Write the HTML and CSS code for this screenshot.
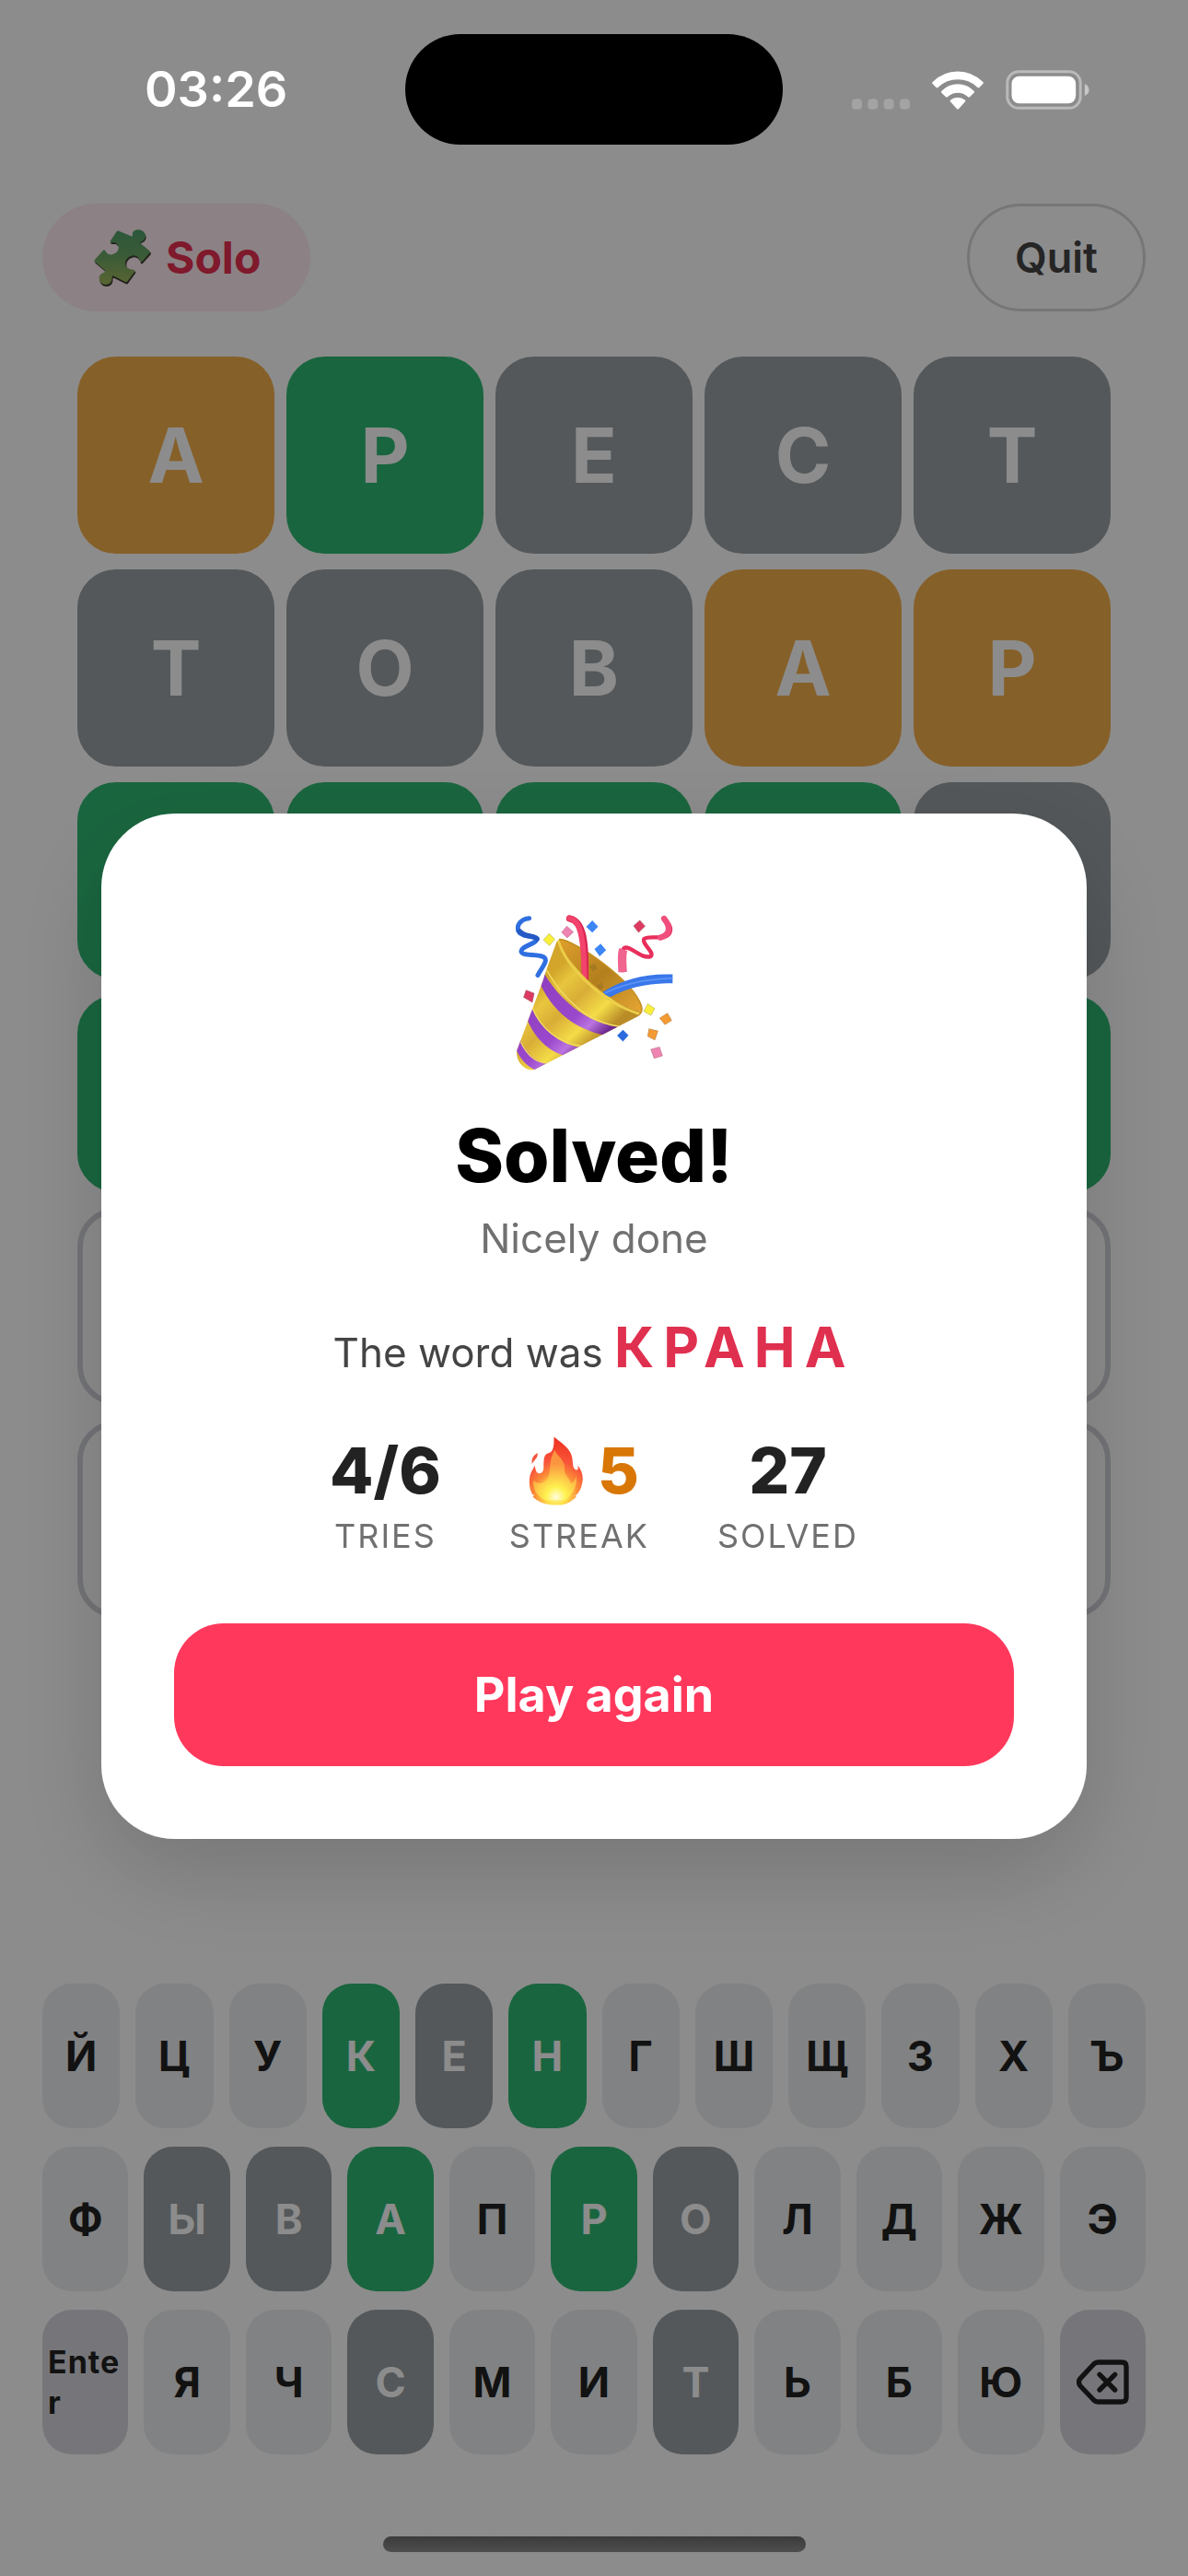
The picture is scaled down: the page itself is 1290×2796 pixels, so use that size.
FILE: index.html
```html
<!DOCTYPE html>
<html lang="en">
<head>
<meta charset="utf-8">
<meta name="viewport" content="width=device-width, initial-scale=1">
<title>Solo – word puzzle</title>
<link rel="stylesheet" href="styles.css">
</head>
<body>
<div class="app">
  <div class="status-bar">
    <div class="status-left"><time class="clock">03:26</time></div>
    <div class="island"></div>
    <div class="status-right">
      <svg class="icon-signal" viewBox="48 134 189 34" aria-hidden="true"><g fill="#fff" fill-opacity=".2"><rect x="48" y="134" width="33" height="34" rx="12"/><rect x="100" y="134" width="33" height="34" rx="12"/><rect x="152" y="134" width="33" height="34" rx="12"/><rect x="204" y="134" width="33" height="34" rx="12"/></g></svg>
      <svg class="icon-wifi" viewBox="310 44 167 124" aria-hidden="true"><g fill="#fff"><path d="M312 79Q347 45 393.500 45Q440 45 475 79Q478 82 475 85L464 96Q461 99 457 96Q430 71 393.500 71Q357 71 330 96Q326 99 323 96L312 85Q309 82 312 79Z"/><path d="M341 108Q364 86 393.500 86Q423 86 446 108Q449 111 446 114L433 127Q430 130 426 127Q412 114 393.500 114Q375 114 361 127Q357 130 354 127L341 114Q338 111 341 108Z"/><path d="M370 137Q380 129 393.500 129Q407 129 417 137Q420 140 417 143L397 166Q393 169 390 166L370 143Q367 140 370 137Z"/></g></svg>
      <svg class="icon-battery" viewBox="548 42 272 129" aria-hidden="true"><rect x="553" y="47" width="238" height="119" rx="37" fill="none" stroke="#fff" stroke-opacity=".4" stroke-width="9"/><rect x="567" y="62" width="209" height="89" rx="25" fill="#fff"/><path d="M805 87Q819 93 819 106.500Q819 120 805 126Z" fill="#fff" fill-opacity=".5"/></svg>
    </div>
  </div>

  <header class="top-bar">
    <div class="mode">
      <svg class="puzzle" viewBox="64 24 186 186" aria-hidden="true">
        <defs><linearGradient id="leaf" x1="0" y1="0" x2="0" y2="1"><stop offset="0" stop-color="#4f9e6a"/><stop offset=".5" stop-color="#6ca664"/><stop offset="1" stop-color="#a5b85c"/></linearGradient></defs>
        <path transform="translate(2 4)" fill="#3c3f35" d="M145 29L188 47C192 44 188 39 191 33C198 22 215 22 225 31C236 42 233 56 222 62C217 65 214 64 215 69L247 96Q249 99 246 103L220 132Q217 134 215 130C212 120 206 112 194 111C180 111 168 123 168 136C168 149 178 155 193 156Q199 157 198 162L173 196Q170 200 165 197L127 178C121 178 126 188 121 196C113 209 96 208 87 199C77 188 80 173 91 168C98 164 104 165 101 159L67 130Q64 127 67 123L94 93Q98 90 101 95C105 106 118 112 131 105C144 98 148 83 141 74C136 67 130 68 121 68Q115 68 118 62L138 31Q141 28 145 29Z"/>
        <path fill="url(#leaf)" d="M145 29L188 47C192 44 188 39 191 33C198 22 215 22 225 31C236 42 233 56 222 62C217 65 214 64 215 69L245 94Q248 97 245 101L220 130Q217 132 215 128C212 118 206 110 194 109C180 109 166 121 166 134C166 147 178 154 193 155Q199 156 197 161L173 193Q170 197 165 194L127 175C120 176 125 186 120 194C112 206 96 206 87 197C77 186 80 172 91 167C98 163 104 164 101 158L67 129Q64 126 67 122L94 92Q98 89 101 94C105 105 118 110 131 103C144 96 148 82 141 73C136 66 130 67 121 67Q115 67 118 61L138 31Q141 28 145 29Z"/>
      </svg>
      <span>Solo</span>
    </div>
    <button class="quit" type="button">Quit</button>
  </header>

  <main class="board">
    <div class="tile near">А</div><div class="tile hit">Р</div><div class="tile miss">Е</div><div class="tile miss">С</div><div class="tile miss">Т</div>
    <div class="tile miss">Т</div><div class="tile miss">О</div><div class="tile miss">В</div><div class="tile near">А</div><div class="tile near">Р</div>
    <div class="tile hit"></div><div class="tile hit"></div><div class="tile hit"></div><div class="tile hit"></div><div class="tile miss"></div>
    <div class="tile hit"></div><div class="tile hit"></div><div class="tile hit"></div><div class="tile hit"></div><div class="tile hit"></div>
    <div class="tile"></div><div class="tile"></div><div class="tile"></div><div class="tile"></div><div class="tile"></div>
    <div class="tile"></div><div class="tile"></div><div class="tile"></div><div class="tile"></div><div class="tile"></div>
  </main>

  <div class="keyboard">
    <div class="key-row">
      <button class="key" type="button">Й</button><button class="key" type="button">Ц</button><button class="key" type="button">У</button><button class="key hit" type="button">К</button><button class="key miss" type="button">Е</button><button class="key hit" type="button">Н</button><button class="key" type="button">Г</button><button class="key" type="button">Ш</button><button class="key" type="button">Щ</button><button class="key" type="button">З</button><button class="key" type="button">Х</button><button class="key" type="button">Ъ</button>
    </div>
    <div class="key-row">
      <button class="key" type="button">Ф</button><button class="key miss" type="button">Ы</button><button class="key miss" type="button">В</button><button class="key hit" type="button">А</button><button class="key" type="button">П</button><button class="key hit" type="button">Р</button><button class="key miss" type="button">О</button><button class="key" type="button">Л</button><button class="key" type="button">Д</button><button class="key" type="button">Ж</button><button class="key" type="button">Э</button>
    </div>
    <div class="key-row">
      <button class="key action enter" type="button">Enter</button><button class="key" type="button">Я</button><button class="key" type="button">Ч</button><button class="key miss" type="button">С</button><button class="key" type="button">М</button><button class="key" type="button">И</button><button class="key miss" type="button">Т</button><button class="key" type="button">Ь</button><button class="key" type="button">Б</button><button class="key" type="button">Ю</button><button class="key action" type="button" aria-label="Delete"><svg class="icon-delete" viewBox="54 52 171 147" aria-hidden="true"><g fill="none" stroke="#212121" stroke-width="16" stroke-linecap="round" stroke-linejoin="round"><path d="M124 61H202Q216 61 216 75V176Q216 190 202 190H124Q116 190 110 184L67 139Q56 126 67 113L110 67Q116 61 124 61Z"/><path d="M129 101L179 151M179 101L129 151"/></g></svg></button>
    </div>
  </div>

  <div class="home-indicator"></div>
</div>

<div class="overlay">
  <section class="modal" role="dialog" aria-modal="true" aria-labelledby="result-title">
    <svg class="party" viewBox="178 155 514 514" aria-hidden="true">
      <defs>
        <linearGradient id="gold" gradientUnits="userSpaceOnUse" x1="240" y1="400" x2="420" y2="590"><stop offset="0" stop-color="#d3a52b"/><stop offset=".2" stop-color="#e8c63e"/><stop offset=".45" stop-color="#d9ad36"/><stop offset=".75" stop-color="#f4dc48"/><stop offset="1" stop-color="#b98c28"/></linearGradient>
        <linearGradient id="violet" gradientUnits="userSpaceOnUse" x1="240" y1="400" x2="420" y2="590"><stop offset="0" stop-color="#8f3fc0"/><stop offset=".6" stop-color="#9a48cc"/><stop offset=".8" stop-color="#bb74e0"/><stop offset="1" stop-color="#6d2a90"/></linearGradient>
        <linearGradient id="mouth" x1="0" y1="0" x2="1" y2="1"><stop offset="0" stop-color="#e0a02c"/><stop offset=".5" stop-color="#b37f1e"/><stop offset="1" stop-color="#e8a834"/></linearGradient>
        <clipPath id="cone"><path d="M312 244C300 280 280 330 268 370L182 600C176 632 205 668 238 664L575 490C590 484 588 470 560 468C480 440 350 330 322 244Z"/></clipPath>
      </defs>
      <path d="M222 169C188 172 176 202 192 218C208 232 240 224 247 236C246 254 198 258 196 276C195 294 250 284 270 296C286 306 262 332 250 355" fill="none" stroke="#2f6fe0" stroke-width="15" stroke-linecap="round" stroke-linejoin="round"/>
      <path d="M191 212C208 232 240 224 247 236" fill="none" stroke="#2559c4" stroke-width="17" stroke-linecap="round"/>
      <path d="M322 238C370 240 560 370 588 455C594 480 580 490 560 478C470 450 340 330 315 250Z" fill="url(#mouth)" stroke="#c59020" stroke-width="5"/>
      <path d="M418 325l18-8 8 16-15 10ZM442 388l15-8 8 14-12 10Z" fill="#a57a20"/>
      <path d="M354 170C398 178 408 245 404 375" fill="none" stroke="#d92450" stroke-width="22" stroke-linecap="round"/>
      <path d="M354 169C388 176 400 225 402 360" fill="none" stroke="#f2436c" stroke-width="18" stroke-linecap="round"/>
      <g clip-path="url(#cone)">
        <path d="M170 230H600V680H170Z" fill="url(#gold)"/>
        <path d="M250 310C300 420 410 525 540 525L500 555C380 545 290 470 250 365Z" fill="url(#violet)"/>
        <path d="M225 445C250 520 320 590 410 592L350 620C290 610 235 560 210 485Z" fill="url(#violet)"/>
        <path d="M190 560C210 605 240 640 290 645L250 668C220 655 195 635 176 590Z" fill="url(#violet)"/>
        <path d="M275 332C330 430 415 515 530 523M230 458C260 530 320 580 395 586M194 572C212 610 240 640 280 642" fill="none" stroke="#f3dc62" stroke-width="4"/>
      </g>
      <path d="M318 245C340 320 450 440 578 480" fill="none" stroke="#edcf4b" stroke-width="8" stroke-linecap="round"/>
      <path d="M462 410Q555 348 690 352V381Q570 380 490 425Q478 428 462 410Z" fill="#3977ea"/>
      <path d="M470 413Q560 368 690 365" fill="none" stroke="#5d94f5" stroke-width="5"/>
      <path d="M526 345C525 310 518 280 532 266C552 256 590 306 619 293C632 280 588 252 597 236C618 222 665 244 680 218C690 198 674 184 663 168" fill="none" stroke="#e82f5c" stroke-width="13" stroke-linejoin="round"/>
      <path d="M527 345C526 315 522 292 529 271" fill="none" stroke="#f0648f" stroke-width="28"/>
      <path d="M662 170C690 205 675 225 650 232" fill="none" stroke="#f04f7e" stroke-width="19" stroke-linecap="round"/>
      <g fill="#3d86f4"><path d="M428 176l19 20-19 20-20-19ZM455 252l18 21-21 20-17-23Z"/><path fill="#2c6bdd" d="M528 533l18 18-18 20-19-19Z"/></g>
      <path fill="#faf03c" stroke="#b9b45a" stroke-width="2" d="M287 219l19 19-18 20-20-18ZM609 448l23 16-13 22-23-13Z"/>
      <path fill="#ee84b1" stroke="#c3718f" stroke-width="2" d="M345 195l21 19-20 19-18-18ZM619 597l28-8 10 29-27 8Z"/>
      <path fill="#dd3a62" stroke="#a64a5e" stroke-width="2" d="M583 176l17 19-21 20-16-21ZM212 404l26 10-6 29-28-16Z"/>
      <path fill="#f49a32" stroke="#b98040" stroke-width="2" d="M673 479l14 23-22 14-17-21ZM613 530l29 7-10 29-23-12Z"/>
    </svg>
    <h1 class="title" id="result-title">Solved!</h1>
    <p class="subtitle">Nicely done</p>
    <p class="answer">The word was <strong class="word">КРАНА</strong></p>
    <dl class="stats">
      <div class="stat"><dt>TRIES</dt><dd>4/6</dd></div>
      <div class="stat"><dt>STREAK</dt><dd class="streak"><svg class="fire" viewBox="32 26 178 226" aria-hidden="true">
        <defs><radialGradient id="flame" gradientUnits="userSpaceOnUse" cx="122" cy="215" r="180"><stop offset="0" stop-color="#fff7b0"/><stop offset=".2" stop-color="#ffe24a"/><stop offset=".4" stop-color="#fb8a37"/><stop offset=".6" stop-color="#f9553a"/><stop offset="1" stop-color="#ee3322"/></radialGradient><radialGradient id="core" gradientUnits="userSpaceOnUse" cx="122" cy="225" r="110"><stop offset="0" stop-color="#fffde0"/><stop offset=".3" stop-color="#fff24f"/><stop offset="1" stop-color="#fc9540"/></radialGradient></defs>
        <path fill="url(#flame)" d="M115 27C140 48 176 68 176 106C177 128 181 134 190 136C195 134 194 128 193 121C207 137 213 160 207 181C205 195 198 210 184 222L189 224L180 231C160 250 140 251 120 251C93 251 67 242 54 231L46 224L50 218L44 216C36 200 32 180 36 158C39 142 47 134 52 121C55 135 56 145 65 147C75 149 82 140 81 126C82 105 80 85 97 81C110 78 116 65 115 27Z"/>
        <path fill="#f4553c" d="M61 80C64 96 52 101 43 116C42 100 45 89 61 80Z"/>
        <path fill="url(#core)" d="M117 70C125 90 153 105 150 130C147 154 165 160 170 180C178 180 185 165 188 157C193 190 176 216 150 235H88C60 222 45 200 48 170C60 185 88 182 97 158C105 130 97 110 117 70Z"/>
      </svg><span>5</span></dd></div>
      <div class="stat"><dt>SOLVED</dt><dd>27</dd></div>
    </dl>
    <button class="play" type="button">Play again</button>
  </section>
</div>
</body>
</html>
```
FILE: styles.css
```css
* {
  box-sizing: border-box;
  margin: 0;
  padding: 0;
}

body {
  background: #fff;
  color: #212121;
  font-family: Inter, "Liberation Sans", sans-serif;
}

button {
  border: 0;
  font: inherit;
  color: inherit;
  background: none;
  cursor: pointer;
}

svg {
  display: block;
  flex: none;
}

.app {
  display: flex;
  flex-direction: column;
  min-height: 100vh;
  padding-bottom: 26px;
}

/* Status bar and home indicator stay above the dimmed layer */
.status-bar,
.home-indicator {
  position: relative;
  z-index: 3;
}

.status-bar {
  display: grid;
  grid-template-columns: minmax(0, 1fr) 410px minmax(0, 1fr);
  align-items: center;
  padding-top: 37px;
}

.status-left {
  padding-left: 157px;
}

.clock {
  color: #fff;
  font-size: 54px;
  font-weight: 600;
  line-height: 64px;
}

.island {
  height: 120px;
  border-radius: 60px;
  background: #000;
}

.status-right {
  display: flex;
  justify-content: flex-end;
  align-items: flex-end;
  gap: 24px;
  padding-right: 107px;
}

.icon-signal {
  width: 63px;
  height: 12px;
}

.icon-wifi {
  width: 56px;
  height: 42px;
}

.icon-battery {
  width: 91px;
  height: 43px;
}

.top-bar {
  display: flex;
  justify-content: space-between;
  margin-top: 64px;
  padding: 0 46px;
}

.mode,
.quit {
  display: flex;
  align-items: center;
  height: 117px;
  border-radius: 59px;
}

.mode {
  gap: 16px;
  padding: 0 54px 0 56px;
  background: #ffecf1;
  color: #e72f50;
  font-size: 48px;
  font-weight: 700;
}

.puzzle {
  width: 62px;
  height: 62px;
}

.quit {
  padding: 0 49px;
  border: 3px solid #d8d8d8;
  color: #444;
  font-size: 45px;
  font-weight: 600;
}

.board {
  display: grid;
  grid-template-columns: repeat(5, 1fr);
  gap: 17px 13px;
  margin: 49px 84px;
}

.tile {
  display: flex;
  align-items: center;
  justify-content: center;
  aspect-ratio: 1;
  border: 6px solid #d2d3da;
  border-radius: 42px;
  color: #fff;
  font-size: 82px;
  font-weight: 700;
}

.hit,
.hit.key {
  border-color: #2fb973;
  background: #2fb973;
  color: #fff;
}

.near {
  border-color: #f5b04c;
  background: #f5b04c;
}

.miss,
.miss.key {
  border-color: #99a0a5;
  background: #99a0a5;
  color: #fff;
}

.keyboard {
  display: flex;
  flex-direction: column;
  gap: 20px;
  margin-top: auto;
  padding: 0 46px;
}

.key-row {
  display: grid;
  grid-auto-flow: column;
  grid-auto-columns: minmax(0, 1fr);
  gap: 17px;
}

.key {
  display: flex;
  align-items: center;
  justify-content: center;
  height: 157px;
  border-radius: 32px;
  background: #ecedef;
  color: #212121;
  font-size: 45px;
  font-weight: 700;
}

.key.action {
  background: #d7d8df;
}

.key.enter {
  padding: 0 6px;
  font-size: 34px;
  line-height: 44px;
  letter-spacing: 1px;
  text-align: left;
  overflow-wrap: anywhere;
}

.icon-delete {
  width: 57px;
  height: 49px;
}

.home-indicator {
  width: 459px;
  height: 17px;
  margin: 89px auto 0;
  border-radius: 9px;
  background: linear-gradient(#3b3b3b, #4e4e4e);
}

.overlay {
  position: fixed;
  inset: 0;
  z-index: 2;
  display: flex;
  align-items: center;
  padding: 177px 110px 94px;
  background: rgba(0, 0, 0, .45);
}

.modal {
  display: flex;
  flex: 1;
  flex-direction: column;
  align-items: center;
  padding: 109px 79px 79px;
  border-radius: 80px;
  background: #fff;
  box-shadow: 0 36px 100px rgba(0, 0, 0, .16);
}

.party {
  width: 171px;
  height: 171px;
}

.title {
  margin-top: 43px;
  color: #000;
  font-size: 80px;
  font-weight: 800;
  line-height: 96px;
}

.subtitle {
  margin-top: 14px;
  color: #707070;
  font-size: 44px;
  line-height: 56px;
}

.answer {
  margin-top: 54px;
  color: #444;
  font-size: 44px;
  line-height: 72px;
}

.word {
  color: #e0304f;
  font-size: 60px;
  font-weight: 700;
  letter-spacing: 10px;
}

.stats {
  display: flex;
  gap: 74px;
  margin-top: 50px;
}

.stat {
  display: flex;
  flex-direction: column-reverse;
  align-items: center;
  gap: 8px;
}

.stat dt {
  color: #707070;
  font-size: 36px;
  line-height: 42px;
  letter-spacing: 2px;
}

.stat dd {
  color: #222;
  font-size: 69px;
  font-weight: 800;
  line-height: 84px;
}

.stat .streak {
  display: flex;
  align-items: center;
  gap: 16px;
  padding-left: 10px;
  color: #d97706;
}

.fire {
  width: 59px;
  height: 75px;
}

.play {
  align-self: stretch;
  height: 155px;
  margin-top: 74px;
  border-radius: 54px;
  background: #ff385c;
  color: #fff;
  font-size: 52px;
  font-weight: 700;
}
```
